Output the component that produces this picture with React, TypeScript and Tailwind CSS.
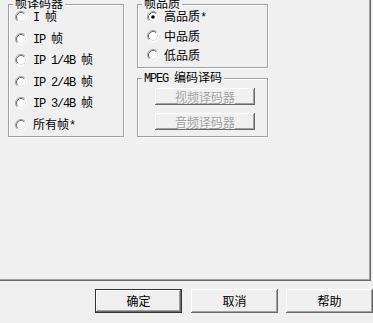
import React from "react";

const Radio = ({ checked = false }: { checked?: boolean }) => (
  <svg width="12" height="12" viewBox="0 0 12 12" className="shrink-0">
    <circle cx="6" cy="6" r="4.5" fill="#ffffff" />
    <path d="M2.11 9.89 A5.5 5.5 0 0 1 9.89 2.11" fill="none" stroke="#a0a0a0" strokeWidth="1" />
    <path d="M2.82 9.18 A4.5 4.5 0 0 1 9.18 2.82" fill="none" stroke="#696969" strokeWidth="1" />
    <path d="M9.89 2.11 A5.5 5.5 0 0 1 2.11 9.89" fill="none" stroke="#ffffff" strokeWidth="1" />
    <path d="M9.18 2.82 A4.5 4.5 0 0 1 2.82 9.18" fill="none" stroke="#e3e3e3" strokeWidth="1" />
    {checked && <circle cx="6" cy="6" r="1.8" fill="#000000" />}
  </svg>
);

const L = ({ children }: { children: React.ReactNode }) => (
  <span className="font-['Liberation_Mono',monospace] text-[12px] tracking-[-1.2px] whitespace-pre">
    {children}
  </span>
);

const Group = ({
  label,
  className,
  children,
}: {
  label: React.ReactNode;
  className: string;
  children?: React.ReactNode;
}) => (
  <div
    className={`relative border border-[#a0a0a0] shadow-[inset_1px_1px_0_#ffffff,1px_1px_0_#ffffff] ${className}`}
  >
    <div className="absolute left-[4px] top-[-9px] px-[2px] bg-[#f0f0f0] leading-[14px] text-[12px] whitespace-pre">
      {label}
    </div>
    {children}
  </div>
);

const LRow = ({ h, children, checked }: { h: string; children: React.ReactNode; checked?: boolean }) => (
  <div className={`flex items-center ${h} pl-[6px] gap-[6px] text-[12px] leading-[14px]`}>
    <Radio checked={checked} />
    <span className="whitespace-pre">{children}</span>
  </div>
);

const RRow = ({ h, children, checked }: { h: string; children: React.ReactNode; checked?: boolean }) => (
  <div className={`flex items-center ${h} pl-[9px] gap-[5px] text-[12px] leading-[14px]`}>
    <Radio checked={checked} />
    <span className="whitespace-pre">{children}</span>
  </div>
);

const DisabledBtn = ({ children }: { children: React.ReactNode }) => (
  <div className="w-[100px] h-[17px] flex items-center justify-center text-[12px] leading-[14px] text-[#a0a0a0] [text-shadow:1px_1px_0_#ffffff] shadow-[inset_-1px_-1px_0_#696969,inset_1px_1px_0_#ffffff,inset_-2px_-2px_0_#a0a0a0]">
    {children}
  </div>
);

export default function App() {
  return (
    <div className="w-[373px] h-[323px] bg-[#f0f0f0] overflow-hidden text-black font-['Noto_Sans_CJK_SC','Noto_Sans',sans-serif]">
      <div className="w-[371px] h-[281px] border-r border-b border-[#696969]">
        <div className="w-full h-full border-r border-b border-[#a0a0a0] pl-[8px] pt-[4px] flex gap-[13px]">
          <Group label="帧译码器" className="w-[116px] h-[133px] pt-[1px]">
            <LRow h="h-[22px]">
              <L>I </L>帧
            </LRow>
            <LRow h="h-[21px]">
              <L>IP </L>帧
            </LRow>
            <LRow h="h-[22px]">
              <L>IP 1/4B </L>帧
            </LRow>
            <LRow h="h-[21px]">
              <L>IP 2/4B </L>帧
            </LRow>
            <LRow h="h-[22px]">
              <L>IP 3/4B </L>帧
            </LRow>
            <LRow h="h-[22px]">
              所有帧<L>*</L>
            </LRow>
          </Group>
          <div className="flex flex-col w-[131px]">
            <Group label="帧品质" className="w-[131px] h-[64px] pt-[3px]">
              <RRow h="h-[18px]" checked>
                高品质<L>*</L>
              </RRow>
              <RRow h="h-[19px]">中品质</RRow>
              <RRow h="h-[19px]">低品质</RRow>
            </Group>
            <Group
              label={
                <>
                  <L>MPEG </L>编码译码
                </>
              }
              className="w-[131px] h-[59px] mt-[10px] pl-[17px] pt-[9px] flex flex-col gap-[8px]"
            >
              <DisabledBtn>视频译码器</DisabledBtn>
              <DisabledBtn>音频译码器</DisabledBtn>
            </Group>
          </div>
        </div>
      </div>
      <div className="flex mt-[8px] pl-[95px]">
        <div className="w-[87px] h-[24px] flex items-center justify-center text-[12px] border border-[#333333] shadow-[inset_-1px_-1px_0_#696969,inset_1px_1px_0_#ffffff,inset_-2px_-2px_0_#a0a0a0]">
          确定
        </div>
        <div className="w-[87px] h-[24px] ml-[9px] flex items-center justify-center text-[12px] shadow-[inset_-1px_-1px_0_#696969,inset_1px_1px_0_#ffffff,inset_-2px_-2px_0_#a0a0a0]">
          取消
        </div>
        <div className="w-[87px] h-[24px] ml-[8px] flex items-center justify-center text-[12px] shadow-[inset_-1px_-1px_0_#696969,inset_1px_1px_0_#ffffff,inset_-2px_-2px_0_#a0a0a0]">
          帮助
        </div>
      </div>
    </div>
  );
}
